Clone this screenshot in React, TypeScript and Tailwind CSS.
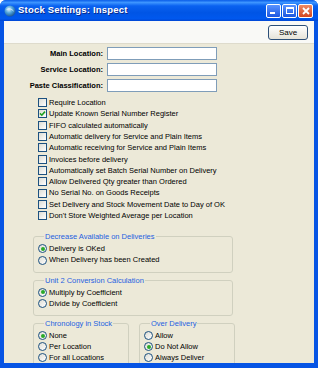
import React from "react";

const fields = ["Main Location:", "Service Location:", "Paste Classification:"];

const options: [string, boolean][] = [
  ["Require Location", false],
  ["Update Known Serial Number Register", true],
  ["FIFO calculated automatically", false],
  ["Automatic delivery for Service and Plain Items", false],
  ["Automatic receiving for Service and Plain Items", false],
  ["Invoices before delivery", false],
  ["Automatically set Batch Serial Number on Delivery", false],
  ["Allow Delivered Qty greater than Ordered", false],
  ["No Serial No. on Goods Receipts", false],
  ["Set Delivery and Stock Movement Date to Day of OK", false],
  ["Don't Store Weighted Average per Location", false],
];

function Check({ label, checked }: { label: string; checked: boolean }) {
  return (
    <div className="flex items-center h-[11.3px]">
      <span className="w-[9px] h-[9px] mr-[2px] border border-[#1c5180] bg-linear-to-br from-[#dcdcd4] to-white flex items-center justify-center">
        {checked && (
          <svg width="7" height="7" viewBox="0 0 7 7">
            <path d="M1 3.4 L2.8 5.2 L6 1.6" fill="none" stroke="#21a121" strokeWidth="1.6" />
          </svg>
        )}
      </span>
      <span>{label}</span>
    </div>
  );
}

function Radio({ label, checked }: { label: string; checked?: boolean }) {
  return (
    <div className="flex items-center h-[11.2px]">
      <span className="w-[9px] h-[9px] mr-[2px] rounded-full border border-[#1c5180] bg-linear-to-br from-[#dcdcd4] to-white flex items-center justify-center">
        {checked && <span className="w-[4px] h-[4px] rounded-full bg-[#2aa92a]" />}
      </span>
      <span>{label}</span>
    </div>
  );
}

function Group({ title, width, children }: { title: string; width: string; children: React.ReactNode }) {
  return (
    <fieldset className={`${width} border border-[#d0d0bf] rounded-[3px] pl-[4px] pb-[6px]`}>
      <legend className="ml-[6px] px-[1px] text-[#1f5fe0] leading-[9px]">{title}</legend>
      <div className="pt-[2px]">{children}</div>
    </fieldset>
  );
}

export default function App() {
  return (
    <div className="w-[318px] h-[368px] flex flex-col bg-[#0654e4] rounded-t-[6px] overflow-hidden font-['Liberation_Sans',Arial,sans-serif] text-[7.5px] text-black">
      {/* title bar */}
      <div className="h-[21px] shrink-0 flex items-center pl-[4px] pr-[5px] bg-[linear-gradient(180deg,#0a5de8_0%,#3d95ff_12%,#0a62f0_28%,#0055e5_60%,#0058ee_88%,#0047d4_100%)]">
        <svg width="12" height="12" viewBox="0 0 12 12" className="shrink-0">
          <defs>
            <radialGradient id="g" cx="0.4" cy="0.35" r="0.7">
              <stop offset="0" stopColor="#d6f0ff" />
              <stop offset="0.5" stopColor="#4aa0d8" />
              <stop offset="1" stopColor="#1a4f8a" />
            </radialGradient>
          </defs>
          <circle cx="6" cy="6" r="5.5" fill="url(#g)" />
          <path d="M2.5 5 C4 3, 7 3.5, 9.5 6" fill="none" stroke="#e8f6ff" strokeWidth="1" opacity="0.8" />
        </svg>
        <span className="ml-[2px] text-white font-bold text-[9.5px] tracking-[0.2px] [text-shadow:1px_1px_0_#0a2a8a]">
          Stock Settings: Inspect
        </span>
        <div className="ml-auto flex gap-[1px]">
          <div className="w-[15px] h-[14px] rounded-[2px] border border-white bg-linear-to-b from-[#5a93ff] to-[#1c56e0] flex items-end pl-[3px] pb-[3px]">
            <span className="w-[5px] h-[2px] bg-white" />
          </div>
          <div className="w-[15px] h-[14px] rounded-[2px] border border-white bg-linear-to-b from-[#5a93ff] to-[#1c56e0] flex items-center justify-center">
            <span className="w-[8px] h-[7px] border border-white border-t-2" />
          </div>
          <div className="w-[15px] h-[14px] rounded-[2px] border border-white bg-linear-to-b from-[#ef8a63] to-[#d3451e] flex items-center justify-center">
            <svg width="8" height="8" viewBox="0 0 8 8">
              <path d="M1 1 L7 7 M7 1 L1 7" stroke="white" strokeWidth="1.8" />
            </svg>
          </div>
        </div>
      </div>

      {/* body */}
      <div className="flex-1 ml-[4px] mr-[4px] mb-[5px] flex flex-col bg-[#ece9d8] overflow-hidden">
        <div className="h-[23px] shrink-0 flex items-start justify-end pt-[4px] pr-[6px] bg-[#f9f9f6] border-b border-[#dedbcc]">
          <button className="w-[40px] h-[15px] rounded-[3px] border border-[#2c4f78] bg-linear-to-b from-white to-[#e6e3d8] text-[8px] leading-none">
            Save
          </button>
        </div>

        <div className="pt-[3px] flex flex-col gap-[3px]">
          {fields.map((f) => (
            <div key={f} className="flex items-center h-[13px]">
              <div className="w-[99px] text-right font-bold">{f}</div>
              <div className="ml-[4px] w-[110px] h-[13px] bg-white border border-[#7f9db9]" />
            </div>
          ))}
        </div>

        <div className="mt-[5px] pl-[34px] flex flex-col">
          {options.map(([label, checked]) => (
            <Check key={label} label={label} checked={checked} />
          ))}
        </div>

        <div className="mt-[11px] pl-[29px] flex flex-col gap-[3px]">
          <Group title="Decrease Available on Deliveries" width="w-[200px]">
            <Radio label="Delivery is OKed" checked />
            <Radio label="When Delivery has been Created" />
          </Group>
          <Group title="Unit 2 Conversion Calculation" width="w-[200px]">
            <Radio label="Multiply by Coefficient" checked />
            <Radio label="Divide by Coefficient" />
          </Group>
          <div className="flex gap-[10px]">
            <Group title="Chronology in Stock" width="w-[96px]">
              <Radio label="None" checked />
              <Radio label="Per Location" />
              <Radio label="For all Locations" />
            </Group>
            <Group title="Over Delivery" width="w-[96px]">
              <Radio label="Allow" />
              <Radio label="Do Not Allow" checked />
              <Radio label="Always Deliver" />
            </Group>
          </div>
        </div>
      </div>
    </div>
  );
}
